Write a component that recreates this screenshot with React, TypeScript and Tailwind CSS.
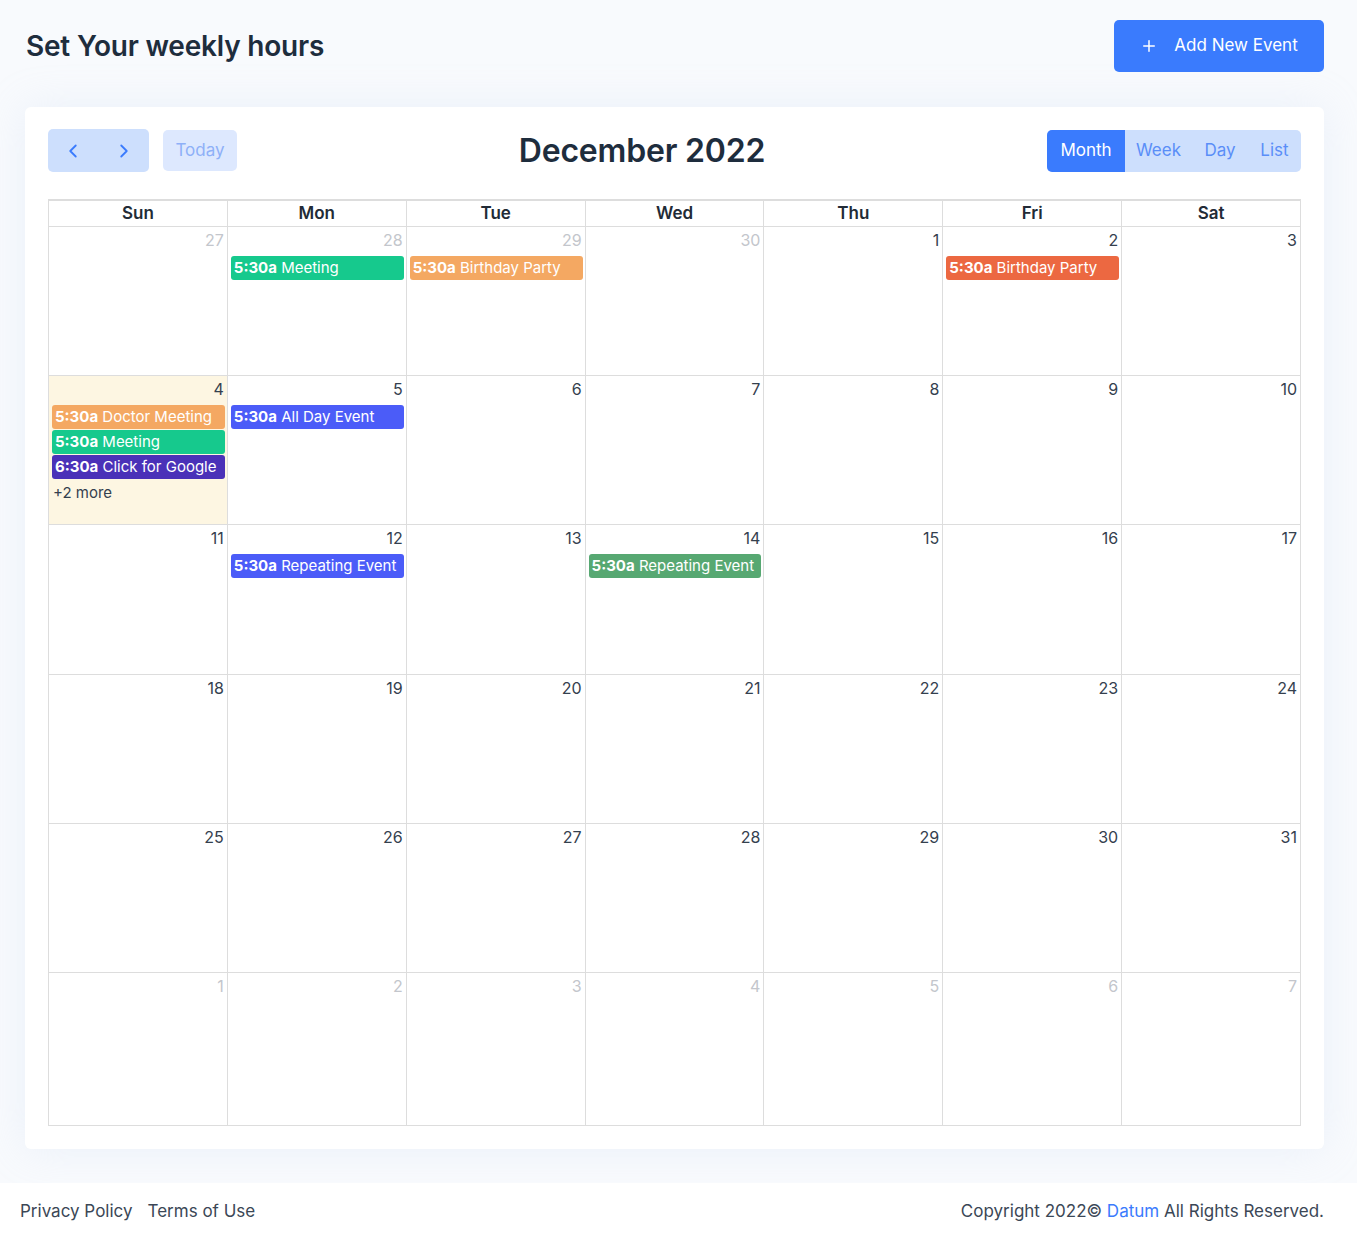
import React from "react";
import { ChevronLeft, ChevronRight, Plus } from "lucide-react";

type Ev = { time: string; title: string; color: string };
type Day = { n: number; muted?: boolean; today?: boolean; events?: Ev[]; more?: number };

const weekdays = ["Sun", "Mon", "Tue", "Wed", "Thu", "Fri", "Sat"];

// row heights as drawn in the month view
const rowHeights = ["h-[149px]", "h-[149px]", "h-[150px]", "h-[149px]", "h-[149px]", "h-[153px]"];

const weeks: Day[][] = [
  [
    { n: 27, muted: true },
    { n: 28, muted: true, events: [{ time: "5:30a", title: "Meeting", color: "bg-[#16c98d]" }] },
    { n: 29, muted: true, events: [{ time: "5:30a", title: "Birthday Party", color: "bg-[#f4a862]" }] },
    { n: 30, muted: true },
    { n: 1 },
    { n: 2, events: [{ time: "5:30a", title: "Birthday Party", color: "bg-[#ec6841]" }] },
    { n: 3 },
  ],
  [
    {
      n: 4,
      today: true,
      events: [
        { time: "5:30a", title: "Doctor Meeting", color: "bg-[#f4a862]" },
        { time: "5:30a", title: "Meeting", color: "bg-[#16c98d]" },
        { time: "6:30a", title: "Click for Google", color: "bg-[#4a31b8]" },
      ],
      more: 2,
    },
    { n: 5, events: [{ time: "5:30a", title: "All Day Event", color: "bg-[#4b5cf8]" }] },
    { n: 6 },
    { n: 7 },
    { n: 8 },
    { n: 9 },
    { n: 10 },
  ],
  [
    { n: 11 },
    { n: 12, events: [{ time: "5:30a", title: "Repeating Event", color: "bg-[#4b5cf8]" }] },
    { n: 13 },
    { n: 14, events: [{ time: "5:30a", title: "Repeating Event", color: "bg-[#57a872]" }] },
    { n: 15 },
    { n: 16 },
    { n: 17 },
  ],
  [18, 19, 20, 21, 22, 23, 24].map((n) => ({ n })),
  [25, 26, 27, 28, 29, 30, 31].map((n) => ({ n })),
  [1, 2, 3, 4, 5, 6, 7].map((n) => ({ n, muted: true })),
];

function EventChip({ ev }: { ev: Ev }) {
  return (
    <div className={`${ev.color} ml-[3px] mr-[2px] mb-px h-6 rounded-[3px] px-[3px] text-[15px] leading-6 text-white whitespace-nowrap overflow-hidden`}>
      <span className="font-bold">{ev.time}</span> {ev.title}
    </div>
  );
}

function DayCell({ day, height }: { day: Day; height: string }) {
  return (
    <div className={`${height} border-r border-b border-[#dddddd] ${day.today ? "bg-[#fdf6e2]" : "bg-white"}`}>
      <div className={`pr-[3px] pt-[1px] text-right text-[16px] leading-6 ${day.muted ? "text-[#c3c6cc]" : "text-[#34404e]"}`}>
        {day.n}
      </div>
      <div className="mt-[4px]">
        {day.events?.map((ev, i) => (
          <EventChip key={i} ev={ev} />
        ))}
        {day.more ? (
          <div className="px-[4px] pt-[1px] text-[15px] leading-6 text-[#34404e]">+{day.more} more</div>
        ) : null}
      </div>
    </div>
  );
}

export default function App() {
  return (
    <div className="min-h-screen bg-[#f8fafd] font-['Inter',sans-serif]">
      <div className="pl-[25px] pr-[33px] pt-5 pb-[34px]">
        {/* Page header */}
        <div className="flex h-[52px] items-center justify-between">
          <h1 className="pl-px text-[28px] font-semibold tracking-[-0.2px] text-[#1e2d3d]">Set Your weekly hours</h1>
          <button className="flex h-[52px] w-[210px] items-center justify-center gap-4 rounded-[5px] bg-[#3a7bfd] text-[17px] text-white">
            <Plus className="h-[18px] w-[18px]" strokeWidth={2} />
            Add New Event
          </button>
        </div>

        {/* Calendar card */}
        <div className="mt-[35px] rounded-md bg-white px-[23px] pt-[22px] pb-[23px] shadow-[0_0_40px_rgba(200,215,240,0.25)]">
          <div className="flex h-[43px] items-center justify-between">
            <div className="flex items-center gap-[14px]">
              <div className="flex h-[43px] w-[101px] items-center justify-between rounded-[5px] bg-[#cddffd] px-[14px] text-[#3a7bfd]">
                <ChevronLeft className="h-[22px] w-[22px]" strokeWidth={2} />
                <ChevronRight className="h-[22px] w-[22px]" strokeWidth={2} />
              </div>
              <button className="h-[41px] w-[74px] rounded-[5px] bg-[#dde8fe] text-[17px] text-[#8eb0f8]">Today</button>
            </div>
            <h2 className="text-[32px] font-semibold tracking-[-0.2px] text-[#1e2d3d]">December 2022</h2>
            <div className="flex h-[42px] overflow-hidden rounded-[5px] bg-[#cddffd] text-[17px]">
              <button className="w-[78px] bg-[#3a7bfd] text-white">Month</button>
              <button className="w-[67px] text-[#5a8ef8]">Week</button>
              <button className="w-[56px] text-[#5a8ef8]">Day</button>
              <button className="w-[53px] text-[#5a8ef8]">List</button>
            </div>
          </div>

          {/* Month grid */}
          <div className="mt-[27px] border-l border-t-2 border-[#dddddd]">
            <div className="grid grid-cols-7">
              {weekdays.map((d) => (
                <div key={d} className="h-[26px] border-r border-b border-[#dddddd] text-center text-[17px] font-semibold leading-[25px] text-[#222b36]">
                  {d}
                </div>
              ))}
            </div>
            {weeks.map((week, wi) => (
              <div key={wi} className="grid grid-cols-7">
                {week.map((day, di) => (
                  <DayCell key={di} day={day} height={rowHeights[wi]} />
                ))}
              </div>
            ))}
          </div>
        </div>
      </div>

      {/* Footer */}
      <footer className="flex h-[54px] items-center justify-between bg-white pl-5 pr-[33px] pt-1 text-[17px] text-[#3b4756]">
        <div className="flex gap-[15px]">
          <span>Privacy Policy</span>
          <span>Terms of Use</span>
        </div>
        <div>
          Copyright 2022© <span className="text-[#3a7bfd]">Datum</span> All Rights Reserved.
        </div>
      </footer>
    </div>
  );
}
